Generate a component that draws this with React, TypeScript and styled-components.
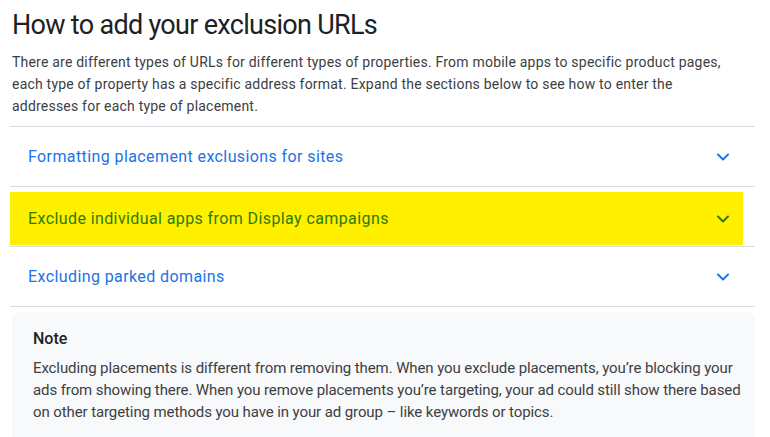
import styled, { createGlobalStyle } from 'styled-components';

const GlobalStyle = createGlobalStyle`
  body {
    margin: 0;
    background: #ffffff;
    font-family: Roboto, "Liberation Sans", Arial, sans-serif;
    -webkit-font-smoothing: antialiased;
  }
`;

const Page = styled.div`
  width: 745px;
  padding: 7px 0 0 10px;
`;

const Title = styled.h2`
  margin: 0 0 8px 2px;
  font-size: 27px;
  line-height: 36px;
  font-weight: 400;
  letter-spacing: -0.7px;
  color: #202124;
`;

const Intro = styled.p`
  margin: 0 14px 9px 2px;
  font-size: 14px;
  line-height: 22px;
  letter-spacing: 0.21px;
  color: #3c4043;
`;

const Accordion = styled.div`
  border-top: 1px solid #dadce0;
`;

const Item = styled.div<{ $highlight?: boolean }>`
  box-sizing: border-box;
  height: 60px;
  border-bottom: 1px solid #dadce0;
  padding: ${({ $highlight }) => ($highlight ? '5px 12px 1px 0' : '0')};
`;

const Header = styled.button<{ $highlight?: boolean }>`
  all: unset;
  box-sizing: border-box;
  width: 100%;
  height: 100%;
  display: flex;
  align-items: center;
  justify-content: space-between;
  padding: 0 ${({ $highlight }) => ($highlight ? '14px' : '26px')} 0 18px;
  background: ${({ $highlight }) => ($highlight ? '#fff000' : 'transparent')};
  color: ${({ $highlight }) => ($highlight ? '#2f7a06' : '#1a73e8')};
  font-size: 16px;
  line-height: 24px;
  letter-spacing: 0.4px;
  cursor: pointer;
`;

const Chevron = ({ color }: { color: string }) => (
  <svg width="12" height="8" viewBox="0 0 12 8" fill="none">
    <polyline
      points="1,1.5 6,6.5 11,1.5"
      stroke={color}
      strokeWidth="2"
      strokeLinecap="round"
      strokeLinejoin="round"
    />
  </svg>
);

const NoteBox = styled.aside`
  margin: 5px 0 0 2px;
  padding: 15px 8px 40px 21px;
  background: #f8f9fa;
  border-radius: 8px;
`;

const NoteTitle = styled.h3`
  margin: 0 0 6px;
  font-size: 16px;
  line-height: 24px;
  font-weight: 500;
  color: #202124;
`;

const NoteText = styled.p`
  margin: 0;
  font-size: 15px;
  line-height: 22px;
  letter-spacing: -0.1px;
  color: #3c4043;
`;

const sections = [
  { title: 'Formatting placement exclusions for sites' },
  { title: 'Exclude individual apps from Display campaigns', highlight: true },
  { title: 'Excluding parked domains' },
];

export default function App() {
  return (
    <>
      <GlobalStyle />
      <Page>
        <Title>How to add your exclusion URLs</Title>
        <Intro>
          There are different types of URLs for different types of properties. From mobile apps to specific product pages,
          each type of property has a specific address format. Expand the sections below to see how to enter the
          addresses for each type of placement.
        </Intro>
        <Accordion>
          {sections.map((s) => (
            <Item key={s.title} $highlight={s.highlight}>
              <Header $highlight={s.highlight}>
                <span>{s.title}</span>
                <Chevron color={s.highlight ? '#2f7a06' : '#1a73e8'} />
              </Header>
            </Item>
          ))}
        </Accordion>
        <NoteBox>
          <NoteTitle>Note</NoteTitle>
          <NoteText>
            Excluding placements is different from removing them. When you exclude placements, you’re blocking your ads
            from showing there. When you remove placements you’re targeting, your ad could still show there based on
            other targeting methods you have in your ad group – like keywords or topics.
          </NoteText>
        </NoteBox>
      </Page>
    </>
  );
}
